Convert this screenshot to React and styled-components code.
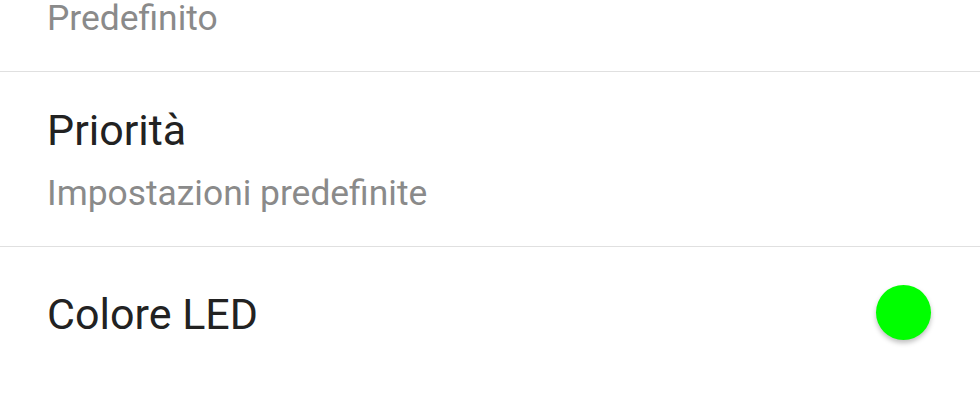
import React from "react";
import styled, { createGlobalStyle } from "styled-components";

const GlobalStyle = createGlobalStyle`
  html, body {
    margin: 0;
    padding: 0;
    background: #ffffff;
    font-family: Roboto, "Noto Sans", sans-serif;
  }
`;

const items = [
  { title: "Suono", summary: "Predefinito" },
  { title: "Priorità", summary: "Impostazioni predefinite" },
  { title: "Colore LED", led: "#00ff00" },
];

export default function App() {
  return (
    <>
      <GlobalStyle />
      <Screen>
        <List>
          {items.map((item) => (
            <Row key={item.title} $single={!item.summary}>
              <Texts>
                <Title>{item.title}</Title>
                {item.summary && <Summary>{item.summary}</Summary>}
              </Texts>
              {item.led && <Led $color={item.led} />}
            </Row>
          ))}
        </List>
      </Screen>
    </>
  );
}

const Screen = styled.div`
  width: 980px;
  height: 420px;
  overflow: hidden;
  background: #ffffff;
`;

// scrolled list: first entry partly above the top edge
const List = styled.div`
  display: flex;
  flex-direction: column;
  margin-top: -103px;
`;

const Row = styled.div`
  display: flex;
  align-items: center;
  justify-content: space-between;
  padding: ${(p) => (p.$single ? "41px 49px 41px 47px" : "32px 49px 31px 47px")};
  border-bottom: 1px solid #e0e0e0;

  &:last-child {
    border-bottom: none;
  }
`;

const Texts = styled.div`
  display: flex;
  flex-direction: column;
  gap: 15px;
`;

const Title = styled.div`
  font-size: 43px;
  line-height: 52px;
  color: #222222;
`;

const Summary = styled.div`
  font-size: 35.4px;
  line-height: 44px;
  color: #8a8a8a;
`;

const Led = styled.div`
  width: 55px;
  height: 55px;
  margin-top: -4px;
  border-radius: 50%;
  background: ${(p) => p.$color};
  box-shadow: 0 3px 5px rgba(0, 0, 0, 0.25);
`;
